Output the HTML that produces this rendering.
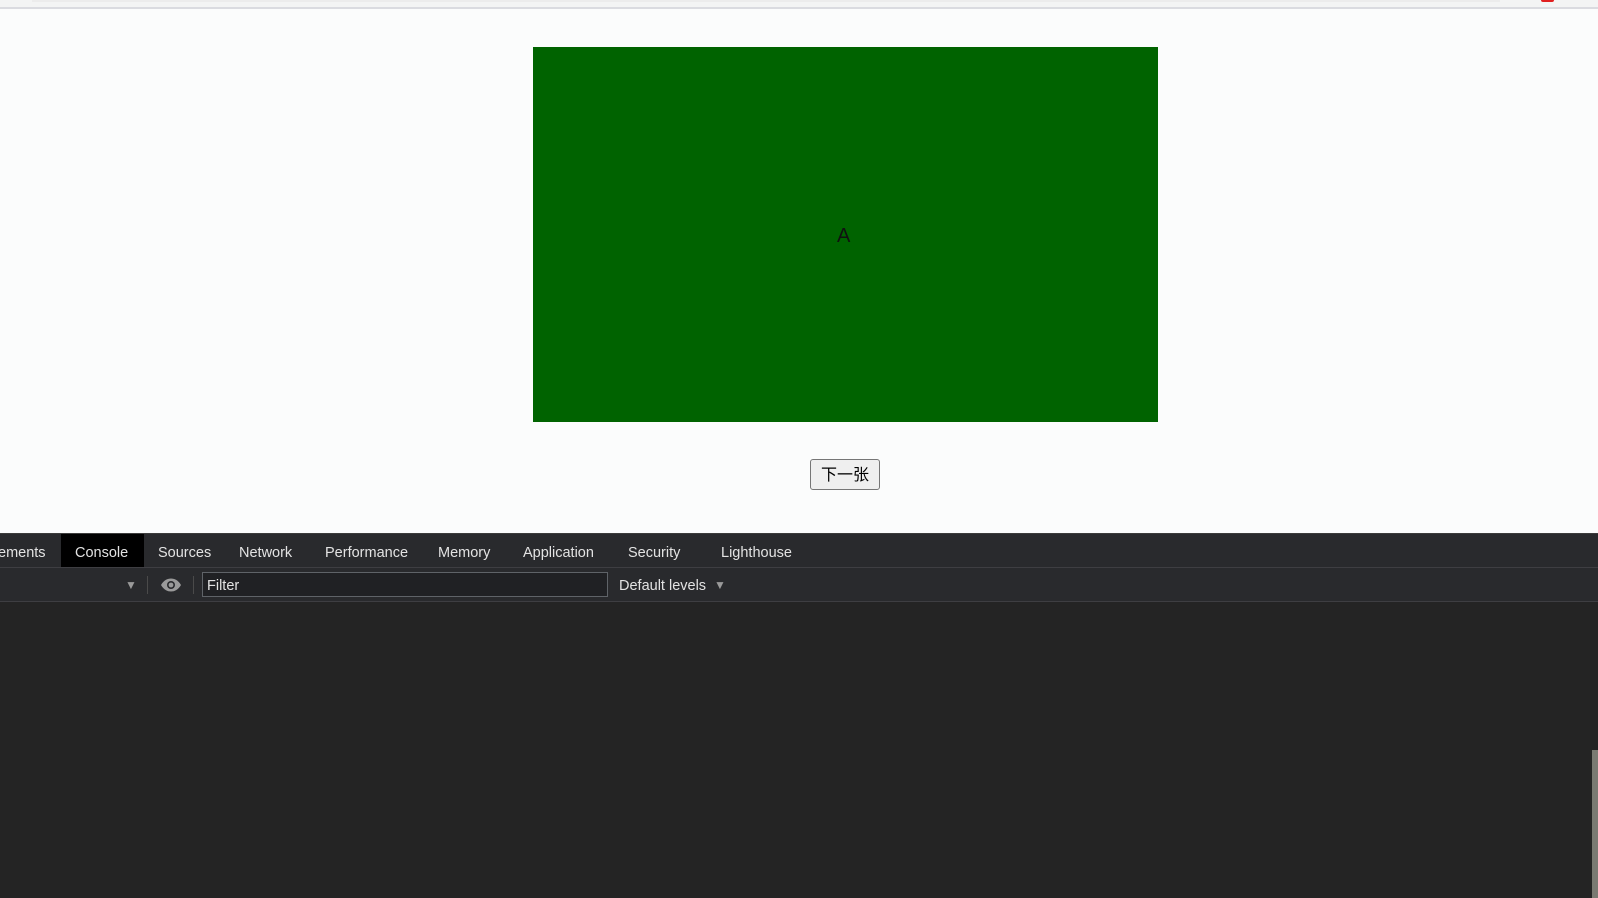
<!DOCTYPE html>
<html><head><meta charset="utf-8"><style>
*{margin:0;padding:0;box-sizing:border-box}
body{width:1598px;height:898px;overflow:hidden;background:#fbfcfc;position:relative;font-family:"Liberation Sans","Noto Sans CJK SC",sans-serif}
.a{position:absolute}
.tab{position:absolute;top:536px;height:34px;line-height:34px;color:#e3e3e3;font-size:14.5px}
</style></head><body>
<div class="a" style="left:0;top:0;width:1598px;height:7px;background:#f3f4f4"></div>
<div class="a" style="left:32px;top:0;width:1468px;height:2px;background:#ececec"></div>
<div class="a" style="left:0;top:7px;width:1598px;height:2px;background:#dadbe0"></div>
<div class="a" style="left:1541px;top:0;width:13px;height:2px;background:#e02020;border-radius:0 0 4px 4px"></div>
<div class="a" style="left:533px;top:47px;width:625px;height:375px;background:#006300"></div>
<div class="a" style="left:837px;top:225px;font-size:20px;color:#111">A</div>
<div class="a" style="left:810px;top:459px;width:70px;height:31px;background:#efefef;border:1px solid #767676;border-radius:3px;font-size:16px;line-height:31px;text-align:center;color:#000">下一张</div>
<div class="a" style="left:0;top:533px;width:1598px;height:35px;background:#292a2d;border-top:1px solid #3c3c3c;border-bottom:1px solid #3e3e42"></div>
<div class="a" style="left:61px;top:534px;width:83px;height:33px;background:#000"></div>
<div class="tab" style="left:-2px">ements</div>
<div class="tab" style="left:75px">Console</div>
<div class="tab" style="left:158px">Sources</div>
<div class="tab" style="left:239px">Network</div>
<div class="tab" style="left:325px">Performance</div>
<div class="tab" style="left:438px">Memory</div>
<div class="tab" style="left:523px">Application</div>
<div class="tab" style="left:628px">Security</div>
<div class="tab" style="left:721px">Lighthouse</div>
<div class="a" style="left:0;top:568px;width:1598px;height:34px;background:#292a2d;border-bottom:1px solid #3e3e42"></div>
<div class="a" style="left:125px;top:578px;color:#9a9a9a;font-size:12px">▼</div>
<div class="a" style="left:147px;top:576px;width:1px;height:18px;background:#4a4a4a"></div>
<svg class="a" style="left:160px;top:577px" width="22" height="16" viewBox="0 0 22 16"><path d="M1 8C4 3 7.5 1.5 11 1.5S18 3 21 8C18 13 14.5 14.5 11 14.5S4 13 1 8Z" fill="#9a9a9a"/><circle cx="11" cy="8" r="4" fill="#292a2d"/><circle cx="11" cy="8" r="2.4" fill="#9a9a9a"/></svg>
<div class="a" style="left:193px;top:576px;width:1px;height:18px;background:#4a4a4a"></div>
<div class="a" style="left:202px;top:572px;width:406px;height:25px;background:#202124;border:1px solid #5f6368"></div>
<div class="a" style="left:207px;top:578px;color:#e3e3e3;font-size:14.5px">Filter</div>
<div class="a" style="left:619px;top:578px;color:#e3e3e3;font-size:14.5px">Default levels</div>
<div class="a" style="left:714px;top:578px;color:#9a9a9a;font-size:12px">▼</div>
<div class="a" style="left:0;top:602px;width:1598px;height:296px;background:#242424"></div>
<div class="a" style="left:1592px;top:750px;width:6px;height:148px;background:#7a7a72"></div>
</body></html>
